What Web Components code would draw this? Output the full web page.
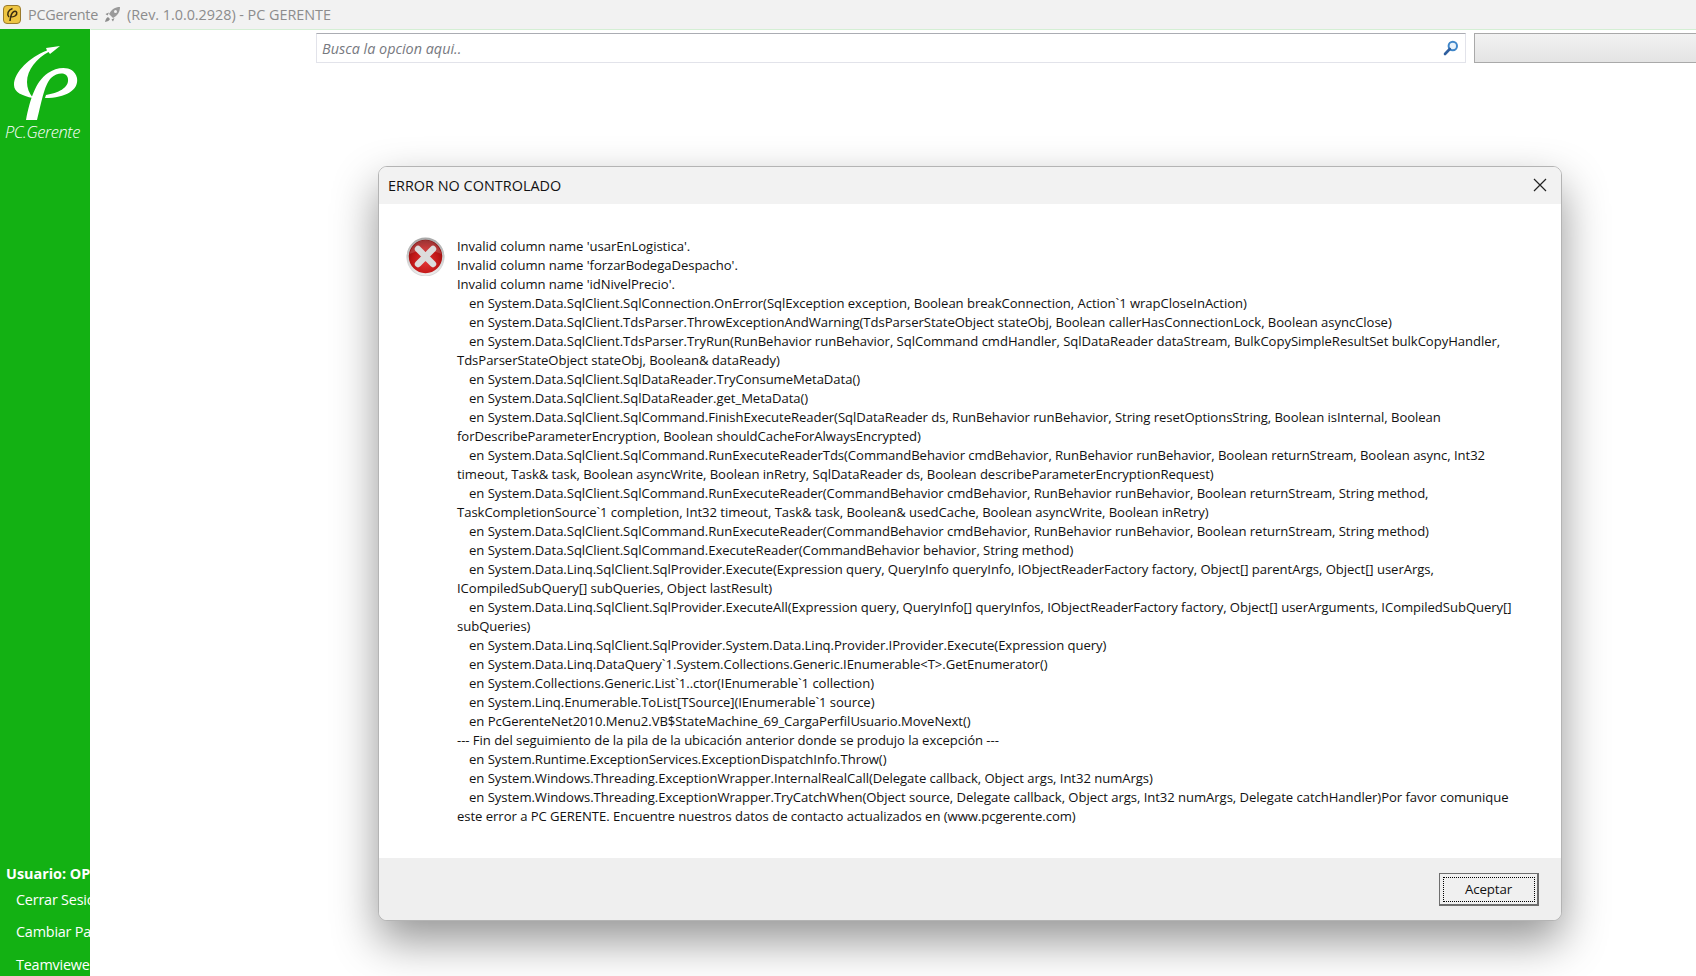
<!DOCTYPE html>
<html>
<head>
<meta charset="utf-8">
<title>PCGerente</title>
<style>
  html, body { margin: 0; height: 100%; }
  body { width: 1696px; height: 976px; overflow: hidden; background: #fff; font-family: "Open Sans", "Liberation Sans", sans-serif; }
  error-dialog { box-shadow: 0 20px 45px rgba(0,0,0,.42); }
</style>
</head>
<body>
<main-window>
  <title-bar slot="title">
    <span slot="name">PCGerente</span>
    <span slot="rev">(Rev. 1.0.0.2928) - PC GERENTE</span>
  </title-bar>
  <side-bar slot="side">
    <side-link bold>Usuario: OP</side-link>
    <side-link>Cerrar Sesió</side-link>
    <side-link>Cambiar Pa</side-link>
    <side-link>Teamviewer</side-link>
  </side-bar>
  <search-row slot="search"></search-row>
</main-window>

<error-dialog heading="ERROR NO CONTROLADO">Invalid column name 'usarEnLogistica'.
Invalid column name 'forzarBodegaDespacho'.
Invalid column name 'idNivelPrecio'.
	en System.Data.SqlClient.SqlConnection.OnError(SqlException exception, Boolean breakConnection, Action`1 wrapCloseInAction)
	en System.Data.SqlClient.TdsParser.ThrowExceptionAndWarning(TdsParserStateObject stateObj, Boolean callerHasConnectionLock, Boolean asyncClose)
	en System.Data.SqlClient.TdsParser.TryRun(RunBehavior runBehavior, SqlCommand cmdHandler, SqlDataReader dataStream, BulkCopySimpleResultSet bulkCopyHandler,
TdsParserStateObject stateObj, Boolean&amp; dataReady)
	en System.Data.SqlClient.SqlDataReader.TryConsumeMetaData()
	en System.Data.SqlClient.SqlDataReader.get_MetaData()
	en System.Data.SqlClient.SqlCommand.FinishExecuteReader(SqlDataReader ds, RunBehavior runBehavior, String resetOptionsString, Boolean isInternal, Boolean
forDescribeParameterEncryption, Boolean shouldCacheForAlwaysEncrypted)
	en System.Data.SqlClient.SqlCommand.RunExecuteReaderTds(CommandBehavior cmdBehavior, RunBehavior runBehavior, Boolean returnStream, Boolean async, Int32
timeout, Task&amp; task, Boolean asyncWrite, Boolean inRetry, SqlDataReader ds, Boolean describeParameterEncryptionRequest)
	en System.Data.SqlClient.SqlCommand.RunExecuteReader(CommandBehavior cmdBehavior, RunBehavior runBehavior, Boolean returnStream, String method,
TaskCompletionSource`1 completion, Int32 timeout, Task&amp; task, Boolean&amp; usedCache, Boolean asyncWrite, Boolean inRetry)
	en System.Data.SqlClient.SqlCommand.RunExecuteReader(CommandBehavior cmdBehavior, RunBehavior runBehavior, Boolean returnStream, String method)
	en System.Data.SqlClient.SqlCommand.ExecuteReader(CommandBehavior behavior, String method)
	en System.Data.Linq.SqlClient.SqlProvider.Execute(Expression query, QueryInfo queryInfo, IObjectReaderFactory factory, Object[] parentArgs, Object[] userArgs,
ICompiledSubQuery[] subQueries, Object lastResult)
	en System.Data.Linq.SqlClient.SqlProvider.ExecuteAll(Expression query, QueryInfo[] queryInfos, IObjectReaderFactory factory, Object[] userArguments, ICompiledSubQuery[]
subQueries)
	en System.Data.Linq.SqlClient.SqlProvider.System.Data.Linq.Provider.IProvider.Execute(Expression query)
	en System.Data.Linq.DataQuery`1.System.Collections.Generic.IEnumerable&lt;T&gt;.GetEnumerator()
	en System.Collections.Generic.List`1..ctor(IEnumerable`1 collection)
	en System.Linq.Enumerable.ToList[TSource](IEnumerable`1 source)
	en PcGerenteNet2010.Menu2.VB$StateMachine_69_CargaPerfilUsuario.MoveNext()
--- Fin del seguimiento de la pila de la ubicación anterior donde se produjo la excepción ---
	en System.Runtime.ExceptionServices.ExceptionDispatchInfo.Throw()
	en System.Windows.Threading.ExceptionWrapper.InternalRealCall(Delegate callback, Object args, Int32 numArgs)
	en System.Windows.Threading.ExceptionWrapper.TryCatchWhen(Object source, Delegate callback, Object args, Int32 numArgs, Delegate catchHandler)Por favor comunique
este error a PC GERENTE. Encuentre nuestros datos de contacto actualizados en (www.pcgerente.com)</error-dialog>

<script>
const LOGO_SWOOSH = 'M46,48 L60,46 L50,54 L48.5,52 C37,58 27,70 27,82 C27,88 29,93 33,98 C22,96 14,92 14,85 C14,72 30,57 47,50.5 Z';
const LOGO_RHO = 'M26,120 C30,100 35,82 48,73 C58,66 74,65 77,78 C79,90 66,98 45,98 L46,95 C58,93 69,88 68,79 C67,72 58,72 51,78 C44,85 41,105 37,120 Z';

class MainWindow extends HTMLElement {
  constructor() {
    super();
    this.attachShadow({ mode: 'open' }).innerHTML = `
      <style>
        :host { display: grid; grid-template-columns: 90px 1fr; grid-template-rows: 29px 1fr; width: 1696px; height: 976px; }
        .top { grid-column: 1 / 3; }
        .content { border-top: 1px solid #d4efd4; border-left: 1px solid #fff; padding: 3px 0 0 225px; min-width: 0; }
      </style>
      <div class="top"><slot name="title"></slot></div>
      <slot name="side"></slot>
      <div class="content"><slot name="search"></slot></div>
    `;
  }
}

class TitleBar extends HTMLElement {
  constructor() {
    super();
    this.attachShadow({ mode: 'open' }).innerHTML = `
      <style>
        :host { display: flex; align-items: center; height: 29px; background: #f2f2f2; color: #8c8c8c; font: 14.4px "Open Sans", sans-serif; letter-spacing: -.25px; }
        svg { flex: none; }
        .app { margin: 0 7px 0 3px; }
        .rocket { margin: 0 6px 0 6px; }
        ::slotted([slot=rev]) { letter-spacing: -.03px; }
      </style>
      <svg class="app" width="18" height="19" viewBox="0 0 18 19">
        <rect x=".5" y=".5" width="17" height="18" rx="3.5" fill="#eec543" stroke="#9a7a2c"/>
        <path d="M9.5 3.5C5 5 3.5 9 6 12M7 16C7.5 11 8.5 7.5 11 6.5C14 5.5 15 9 12 11C10.5 12 8.5 12 7.5 12" fill="none" stroke="#3a2c10" stroke-width="1.5"/>
      </svg>
      <slot name="name"></slot>
      <svg class="rocket" width="17" height="17" viewBox="0 0 17 17">
        <path d="M16 1C11 1 7.5 3.5 5 8L9 12C13.5 9.5 16 6 16 1Z" fill="#9a9a9a"/>
        <circle cx="11.5" cy="5.5" r="1.5" fill="#f2f2f2"/>
        <path d="M5 6.5L1.5 8L3.5 9.5ZM10.5 12L9 15.5L7.5 13.5ZM4 11C2.5 11.5 1.5 13.5 1 16C3.5 15.5 5.5 14.5 6 13Z" fill="#8c8c8c"/>
      </svg>
      <slot name="rev"></slot>
    `;
  }
}

class SideBar extends HTMLElement {
  constructor() {
    super();
    this.attachShadow({ mode: 'open' }).innerHTML = `
      <style>
        :host { display: flex; flex-direction: column; width: 90px; height: 947px; background: #13b113; overflow: hidden; color: #fff; }
        .brand { height: 110px; flex: none; }
        svg { display: block; }
        .name { margin: -29px 0 0 5px; font: italic 300 16.4px "Open Sans", sans-serif; letter-spacing: -.4px; white-space: nowrap; }
        .links { margin-top: auto; height: 112.5px; flex: none; }
      </style>
      <div class="brand">
        <svg width="90" height="120" viewBox="0 29 90 120"><path d="${LOGO_SWOOSH}" fill="#fff"/><path d="${LOGO_RHO}" fill="#fff"/></svg>
        <div class="name">PC.Gerente</div>
      </div>
      <div class="links"><slot></slot></div>
    `;
  }
}

class SideLink extends HTMLElement {
  constructor() {
    super();
    this.attachShadow({ mode: 'open' }).innerHTML = `
      <style>
        :host { display: block; height: 32.5px; padding-left: 16px; font: 14.4px/20px "Open Sans", sans-serif; letter-spacing: -.2px; white-space: nowrap; }
        :host([bold]) { height: 26px; padding-left: 6px; font-weight: 700; letter-spacing: 0; }
      </style>
      <slot></slot>
    `;
  }
}

class SearchRow extends HTMLElement {
  constructor() {
    super();
    this.attachShadow({ mode: 'open' }).innerHTML = `
      <style>
        :host { display: flex; gap: 8px; height: 30px; }
        .box { box-sizing: border-box; width: 1150px; flex: none; display: flex; align-items: center; justify-content: space-between; padding: 0 6px 0 5px; background: #fff;
          border: 1px solid #e2e3ea; border-top-color: #abadb3; }
        input { border: 0; outline: 0; padding: 0; flex: 1; font: italic 14.4px "Open Sans", sans-serif; letter-spacing: 0; background: none; }
        input::placeholder { color: #77797f; opacity: 1; }
        .side { flex: 1; box-sizing: border-box; border: 1px solid #a9a9a9; border-right: 0; background: linear-gradient(#f2f2f2, #e4e4e4); }
      </style>
      <div class="box">
        <input placeholder="Busca la opcion aqui..">
        <svg width="16" height="16" viewBox="0 0 16 16">
          <circle cx="9.8" cy="6" r="4.2" fill="#e8f2fb" stroke="#3f86c9" stroke-width="2"/>
          <path d="M6.8 9L2 14" stroke="#2f5f9f" stroke-width="2.6" stroke-linecap="round"/>
        </svg>
      </div>
      <div class="side"></div>
    `;
  }
}

class ErrorDialog extends HTMLElement {
  constructor() {
    super();
    const heading = this.getAttribute('heading');
    this.attachShadow({ mode: 'open' }).innerHTML = `
      <style>
        :host { position: absolute; left: 378px; top: 166px; width: 1184px; height: 755px; display: flex; flex-direction: column; box-sizing: border-box;
          background: #fff; border: 1px solid #b4b4b4; border-radius: 9px; overflow: hidden; color: #111; font-family: "Open Sans", sans-serif; }
        header { box-sizing: border-box; height: 37px; flex: none; display: flex; align-items: center; justify-content: space-between; padding: 0 14px 1px 9px; background: #f2f2f2; font-size: 14.4px; letter-spacing: .03px; }
        header svg { display: block; }
        .body { flex: 1; display: flex; min-height: 0; padding: 33px 0 0 27px; }
        .icon { flex: none; width: 39px; height: 39px; margin-right: 12px; }
        .msg { margin: 0; white-space: pre; tab-size: 12px; font-size: 13.1px; line-height: 19px; letter-spacing: -.05px; }
        footer { box-sizing: border-box; height: 62px; flex: none; background: #efefef; display: flex; justify-content: flex-end; align-items: flex-start; padding: 15px 22px 0 0; }
        button { box-sizing: border-box; width: 100px; height: 33px; padding: 0; background: #f0f0f0; color: #111; font: 13.3px "Open Sans", sans-serif; letter-spacing: -.1px;
          border: 1px solid #6e6e6e; border-right-width: 2px; border-bottom-width: 2px; outline: 1px dotted #000; outline-offset: -5px; }
      </style>
      <header>
        <span>${heading}</span>
        <svg width="14" height="14" viewBox="0 0 14 14"><path d="M1 1L13 13M13 1L1 13" stroke="#222" stroke-width="1.2" fill="none"/></svg>
      </header>
      <div class="body">
        <svg class="icon" viewBox="0 0 39 39">
          <defs>
            <radialGradient id="red" cx="50%" cy="65%" r="62%">
              <stop offset="0" stop-color="#e23434"/><stop offset=".6" stop-color="#c01717"/><stop offset="1" stop-color="#860d0d"/>
            </radialGradient>
            <linearGradient id="rim" x1="0" y1="0" x2="0" y2="1">
              <stop offset="0" stop-color="#a9a9a9"/><stop offset="1" stop-color="#ececec"/>
            </linearGradient>
          </defs>
          <circle cx="19.5" cy="20.5" r="19" fill="#00000026"/>
          <circle cx="19.5" cy="19.5" r="17.8" fill="url(#red)" stroke="url(#rim)" stroke-width="2.2"/>
          <path d="M3.5 17C6 7.5 13 3 19.5 3C26 3 33 7.5 35.5 17C28 12.5 11 12.5 3.5 17Z" fill="#fff" opacity=".16"/>
          <path d="M12 12L27 27M27 12L12 27" stroke="#dcdcdc" stroke-width="6.4" stroke-linecap="round"/>
        </svg>
        <div class="msg"><slot></slot></div>
      </div>
      <footer><button>Aceptar</button></footer>
    `;
  }
}

customElements.define('main-window', MainWindow);
customElements.define('title-bar', TitleBar);
customElements.define('side-bar', SideBar);
customElements.define('side-link', SideLink);
customElements.define('search-row', SearchRow);
customElements.define('error-dialog', ErrorDialog);
</script>
</body>
</html>
